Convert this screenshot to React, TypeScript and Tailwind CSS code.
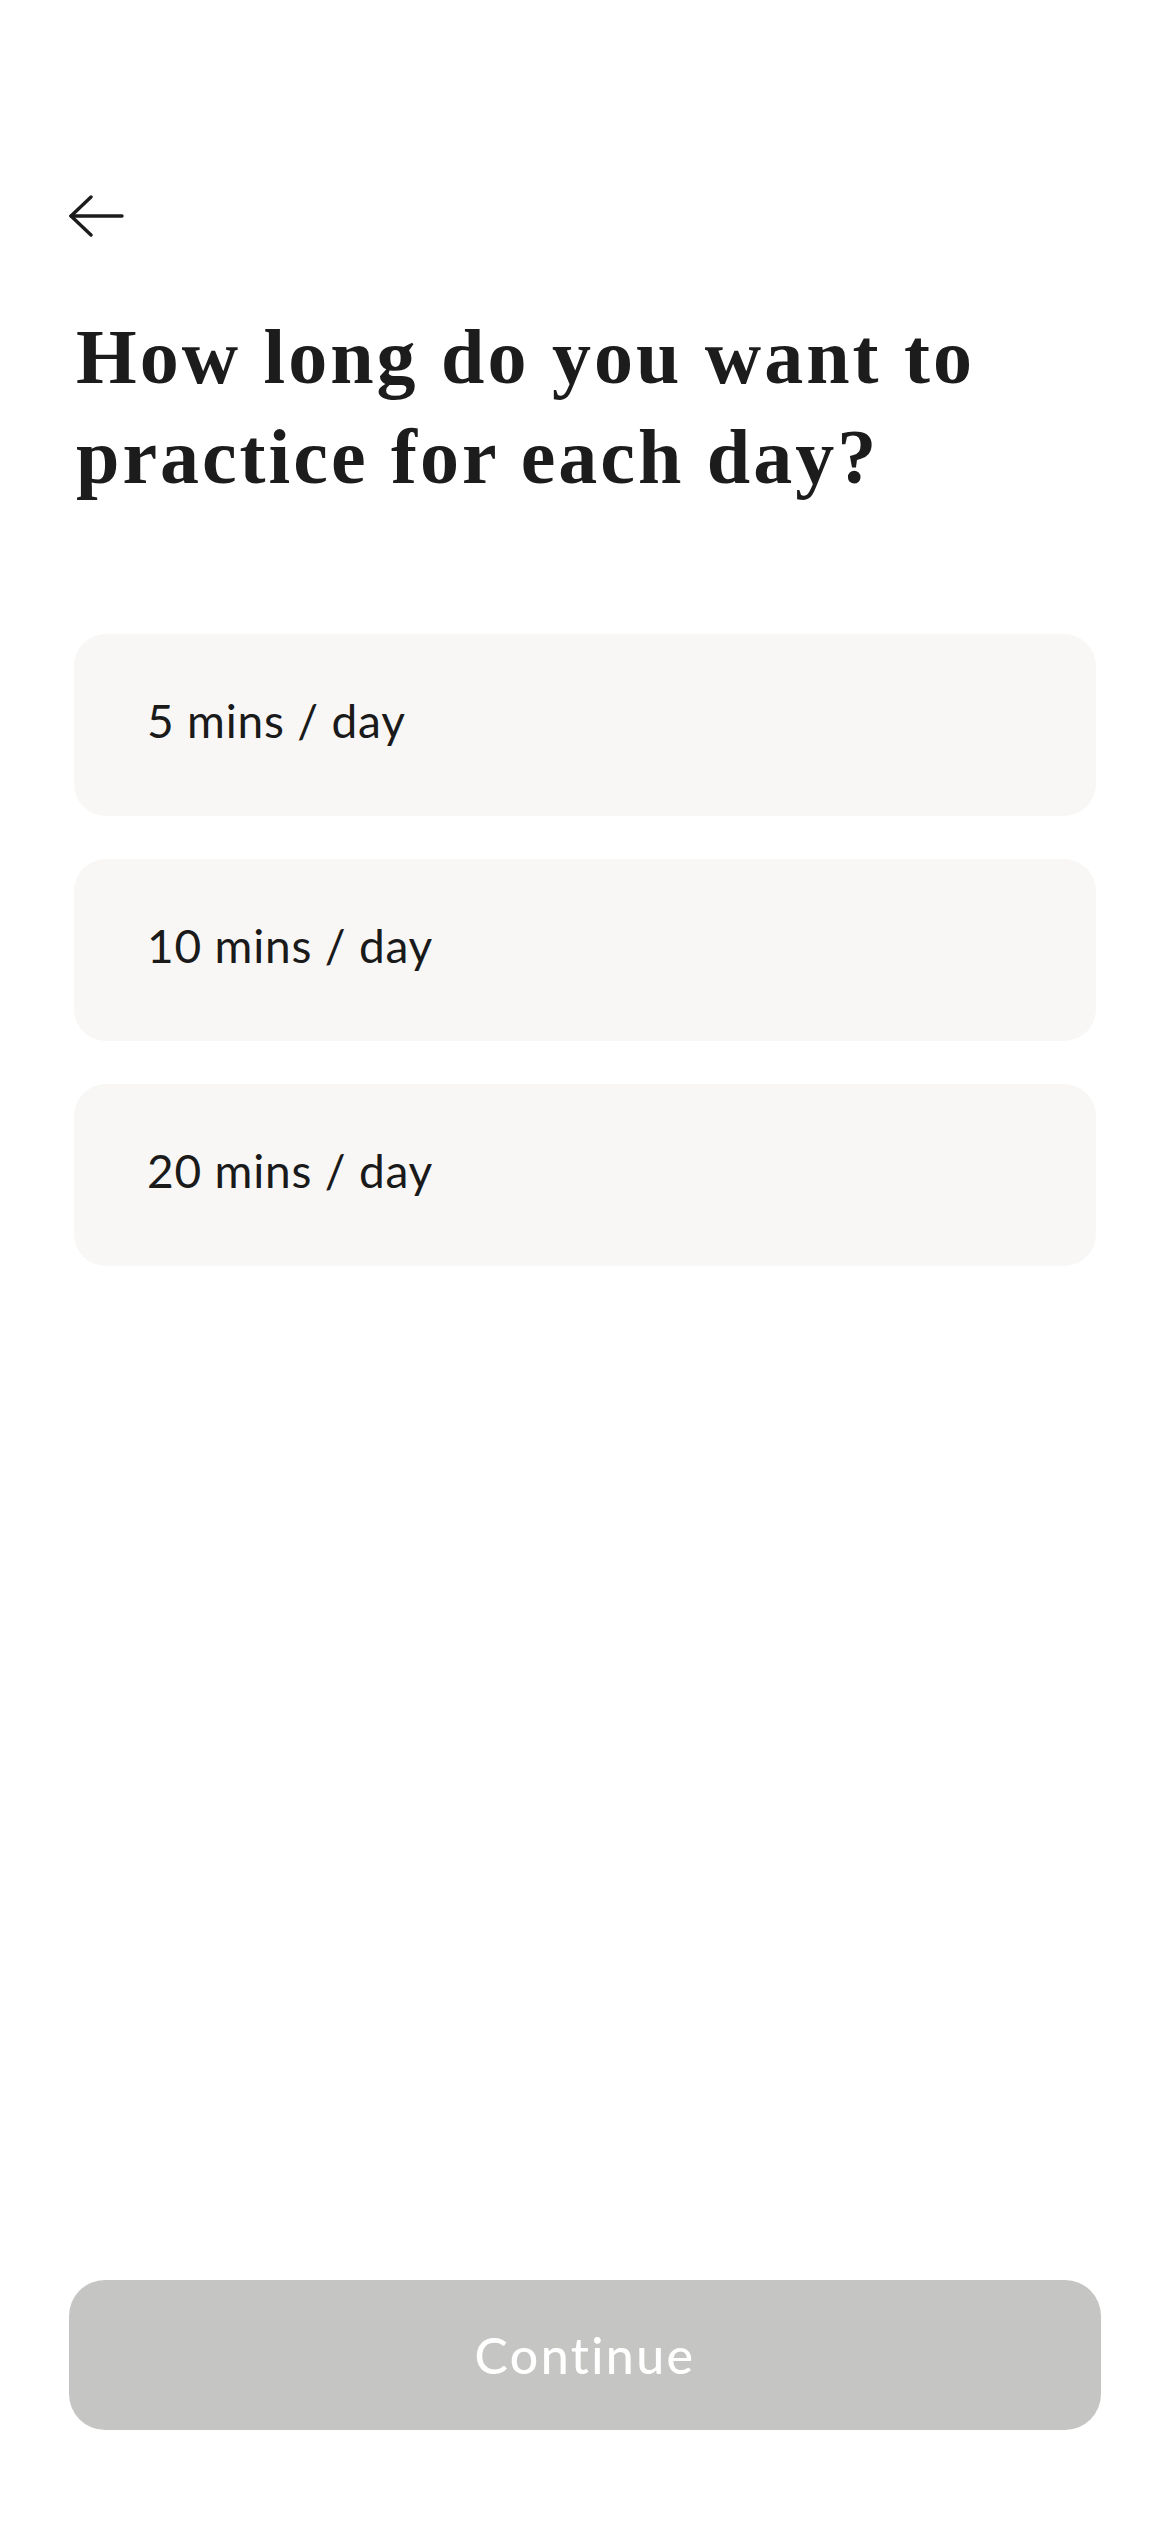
import { useState } from "react";

const options = ["5 mins / day", "10 mins / day", "20 mins / day"];

function BackArrow() {
    return (
        <svg width="56" height="42" viewBox="0 0 56 42" fill="none" stroke="#1c1c1c" strokeWidth="3.4" strokeLinecap="round" strokeLinejoin="round">
            <path d="M23 2 L3 21 L23 40" />
            <path d="M3 21 H54" />
        </svg>
    );
}

export default function App() {
    const [picked, setPicked] = useState<number | null>(null);

    return (
        <div className="flex h-[2532px] w-[1170px] flex-col bg-white font-['Lato',sans-serif] text-[#1a1a1a]">
            <div className="pl-[68px] pt-[195px]">
                <button className="block">
                    <BackArrow />
                </button>
            </div>

            <h1 className="mt-[70px] px-[76px] font-['Liberation_Serif',serif] text-[78px] font-bold leading-[100px] tracking-[3px] text-[#1c1c1c]">
                How long do you want to
                <br />
                practice for each day?
            </h1>

            <div className="mt-[127px] flex flex-col gap-[43px] px-[74px]">
                {options.map((opt, i) => (
                    <button
                        key={opt}
                        onClick={() => setPicked(i)}
                        className={`flex h-[182px] items-center rounded-[32px] pb-[9px] pl-[73px] text-left text-[46px] tracking-[0.8px] ${picked === i ? "bg-[#efece8]" : "bg-[#f8f7f5]"}`}
                    >
                        {opt}
                    </button>
                ))}
            </div>

            <div className="mt-auto px-[69px] pb-[102px]">
                <button
                    disabled={picked === null}
                    className="flex h-[150px] w-full items-center justify-center rounded-[36px] bg-[#c5c5c3] text-[50px] font-medium tracking-[2.4px] text-white"
                >
                    Continue
                </button>
            </div>
        </div>
    );
}
